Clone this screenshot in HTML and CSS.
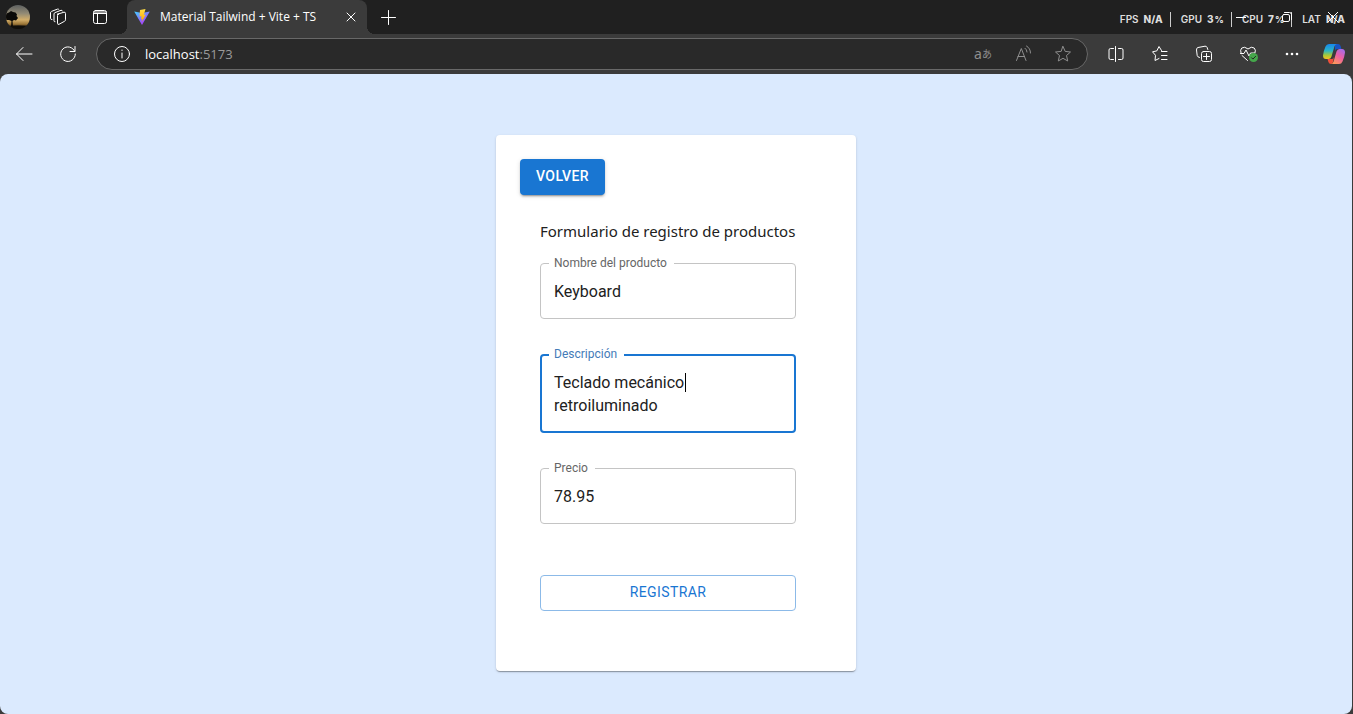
FILE: index.html
```html
<!DOCTYPE html>
<html lang="es">
<head>
<meta charset="utf-8">
<meta name="viewport" content="width=device-width, initial-scale=1">
<title>Material Tailwind + Vite + TS</title>
<link rel="stylesheet" href="styles.css">
</head>
<body>
<div class="browser">
  <header class="titlebar">
    <button class="profile" aria-label="Perfil">
      <svg width="24" height="24" viewBox="0 0 24 24">
        <defs>
          <linearGradient id="sky" x1="0" y1="0" x2="0" y2="1">
            <stop offset="0" stop-color="#5d6060"/><stop offset=".35" stop-color="#928a75"/>
            <stop offset=".62" stop-color="#d3ae69"/><stop offset=".8" stop-color="#9a7435"/>
            <stop offset=".9" stop-color="#2a2114"/><stop offset="1" stop-color="#15110c"/>
          </linearGradient>
          <clipPath id="disc"><circle cx="12" cy="12" r="12"/></clipPath>
        </defs>
        <g clip-path="url(#disc)">
          <rect width="24" height="24" fill="url(#sky)"/>
          <path d="M0 9 1.500 8 3 7.500 5 6 7 7 9.500 7.500 11 9.500 10.500 11 12 13 10 15.500 8 15 6.500 16 7 22H5L5.500 16 3 15 0 15Z" fill="#0b0a08"/>
          <path d="M0 21.500q8-1.500 24-.5v4H0Z" fill="#100e0a"/>
        </g>
      </svg>
    </button>
    <button class="bar-button" aria-label="Áreas de trabajo">
      <svg class="line" width="18" height="18" viewBox="0 0 18 18"><path d="M8.500 6.200 15 4.200q1.500-.2 1.500 1.200v6.400q0 1-1 1.500l-5.500 3q-1.500.5-1.500-1V7.500q0-.9 1-1.300ZM6 13.800q-1 .2-1-1V6q0-1 1-1.400l6-2.300q1.200-.3 1.500.7M3 11.500q-1.500.2-1.500-1V4.800q0-1 1-1.400l6-2.300q1-.3 1.500.5"/></svg>
    </button>
    <button class="bar-button" aria-label="Menú de pestañas">
      <svg class="line" width="16" height="16" viewBox="0 0 16 16"><rect x="1.500" y="1.500" width="13" height="13" rx="2"/><path d="M2 3h12M2 4.500h12M5.500 5v9"/></svg>
    </button>
    <div class="tab">
      <svg width="16" height="16" viewBox="0 0 16 16">
        <defs>
          <linearGradient id="vite" x1="0" y1="0" x2=".7" y2="1"><stop offset="0" stop-color="#41d1ff"/><stop offset="1" stop-color="#b52cfe"/></linearGradient>
          <linearGradient id="bolt" x1="0" y1="0" x2="0" y2="1"><stop offset="0" stop-color="#ffdf45"/><stop offset="1" stop-color="#ff9f00"/></linearGradient>
        </defs>
        <path d="M.2 2.600 8 16 15.800 2.600 8 4Z" fill="url(#vite)"/>
        <path d="M11.500 0 6 1.100 5.500 7.600 7.500 7.200 7 10.200 8.300 9.800 7.700 13 11.800 5.600 9.800 6Z" fill="url(#bolt)"/>
      </svg>
      <span class="tab-title">Material Tailwind + Vite + TS</span>
      <button class="tab-close" aria-label="Cerrar pestaña"><svg class="line" width="10" height="10" viewBox="0 0 10 10"><path d="M1 1l8 8M9 1 1 9"/></svg></button>
    </div>
    <button class="bar-button" aria-label="Nueva pestaña"><svg class="line" width="15" height="15" viewBox="0 0 15 15"><path d="M7.500 .5v14M.5 7.500h14"/></svg></button>
    <dl class="stats">
      <div class="stat"><dt>FPS</dt><dd>N/A</dd></div>
      <div class="stat"><dt>GPU</dt><dd>3<small>%</small></dd></div>
      <div class="stat"><dt>CPU</dt><dd>7<small>%</small></dd></div>
      <div class="stat"><dt>LAT</dt><dd>N/A</dd></div>
    </dl>
    <div class="window-controls">
      <button aria-label="Minimizar"><svg class="line" width="10" height="10" viewBox="0 0 10 10"><path d="M0 5.500h10"/></svg></button>
      <button aria-label="Restaurar"><svg class="line" width="10" height="10" viewBox="0 0 10 10"><rect x=".5" y="2.500" width="7" height="7" rx="1.500"/><path d="M2.500.5h5q2 0 2 2v5"/></svg></button>
      <button aria-label="Cerrar"><svg class="line" width="10" height="10" viewBox="0 0 10 10"><path d="M0 0l10 10M10 0 0 10"/></svg></button>
    </div>
  </header>

  <nav class="toolbar">
    <button class="tool" aria-label="Atrás"><svg class="line" width="18" height="16" viewBox="0 0 18 16"><path d="M1.500 8H17M8 1.500 1.500 8 8 14.500"/></svg></button>
    <button class="tool" aria-label="Actualizar"><svg class="line" width="18" height="18" viewBox="0 0 18 18"><path d="M15.800 6.500A7.300 7.300 0 1 0 16.300 9M16 1.500v5h-5"/></svg></button>
    <div class="address">
      <button class="info" aria-label="Información del sitio"><svg class="line" width="18" height="18" viewBox="0 0 18 18"><circle cx="9" cy="9" r="7.500"/><path d="M9 8v5M9 5v.5"/></svg></button>
      <div class="url" role="textbox" aria-label="Dirección" contenteditable="true" spellcheck="false"><span class="host">localhost</span>:5173</div>
      <button class="page-action translate" aria-label="Traducir">a<span class="kana">あ</span></button>
      <button class="page-action" aria-label="Leer en voz alta"><svg class="line" width="18" height="18" viewBox="0 0 18 18"><path d="M2.500 15.500 7.300 3.500 12 15.500M4 11.500h6.500M11 3.200q2 1.300 2 3.800M12.500 1q4 2.300 4 7"/></svg></button>
      <button class="page-action" aria-label="Agregar a favoritos"><svg class="line" width="18" height="18" viewBox="0 0 18 18"><path d="M9 1.500 11.200 6.400 16.500 7 12.500 10.500 13.700 16 9 13.300 4.300 16 5.500 10.500 1.500 7 6.800 6.400Z"/></svg></button>
    </div>
    <button class="tool" aria-label="Pantalla dividida"><svg class="line" width="18" height="18" viewBox="0 0 18 18"><path d="M6.500 3.500h-3q-1.500 0-1.500 1.500v8q0 1.500 1.500 1.500h3M11.500 3.500h3q1.500 0 1.500 1.500v8q0 1.500-1.500 1.500h-3M8.500 1.500v15"/></svg></button>
    <button class="tool" aria-label="Favoritos"><svg class="line" width="18" height="18" viewBox="0 0 18 18"><path d="M10.500 5.500 8 1.500 5.800 5.900 1.500 6.800 4.500 10.300 4 15.500 8 13.500M10.500 6.500H16M10.500 10.500H16M10.500 14.500H16"/></svg></button>
    <button class="tool" aria-label="Colecciones"><svg class="line" width="18" height="18" viewBox="0 0 18 18"><rect x="6.500" y="6.500" width="10" height="10" rx="2"/><path d="M11.500 8.500v6M8.500 11.500h6M4.500 12.500q-2-.3-2.300-2L1.500 5q-.2-2 1.500-2.500l7-1.300q1.500-.1 2 1l.8 2.300"/></svg></button>
    <button class="tool" aria-label="Estado del navegador"><svg width="20" height="18" viewBox="-1 0 20 18"><path class="stroke" d="M2 8Q.8 4.800 2.800 3 5.500 1 9 4q3.500-3 6.200-1Q17.200 4.800 16 8M3 10.500 8.500 15.500M1.500 8.500H5L7 5l3 6 1.500-3h4"/><circle cx="14.500" cy="12.500" r="4.500" fill="#45a74b"/><path d="M12.300 12.500l1.600 1.600 3-3" stroke="#222" fill="none"/></svg></button>
    <button class="tool" aria-label="Configuración y más"><svg width="14" height="4" viewBox="0 0 14 4" fill="#fff"><circle cx="2" cy="2" r="1.300"/><circle cx="7" cy="2" r="1.300"/><circle cx="12" cy="2" r="1.300"/></svg></button>
    <button class="tool copilot" aria-label="Copilot">
      <svg width="22" height="20" viewBox="0 0 22 20">
        <defs>
          <linearGradient id="cool" x1="0" y1="0" x2="0" y2="1"><stop offset="0" stop-color="#1687ee"/><stop offset=".45" stop-color="#2cb5c5"/><stop offset=".75" stop-color="#a8c936"/><stop offset="1" stop-color="#f6bf23"/></linearGradient>
          <linearGradient id="warm" x1=".8" y1="0" x2=".2" y2="1"><stop offset="0" stop-color="#a56be9"/><stop offset=".45" stop-color="#ed5fa5"/><stop offset="1" stop-color="#ff9b53"/></linearGradient>
        </defs>
        <path d="M12 0h3q2 0 2.600 2l.8 3H14q-1.500 0-2 2Z" fill="#1753c4"/>
        <path d="M4.500 15H9q1.500 0 2-2l-1 5q-.5 2-2 2 -2 0-2.600-2Z" fill="#f0503b"/>
        <path d="M6 0h8q-2 .2-2.600 2.500L8.500 12.500Q7.700 15 5.500 15H3q-3 0-3-3.500Q.5 7 2.500 2.500 3.500 0 6 0Z" fill="url(#cool)"/>
        <path d="M16 20H8q2-.2 2.600-2.500L13.500 7.500Q14.300 5 16.500 5H19q3 0 3 3.500Q21.500 13 19.500 17.500 18.500 20 16 20Z" fill="url(#warm)"/>
      </svg>
    </button>
  </nav>

  <main class="page">
    <section class="card">
      <button class="button contained">Volver</button>
      <form class="form">
        <h1 class="form-title">Formulario de registro de productos</h1>
        <div class="field">
          <input id="name" type="text" value="Keyboard">
          <label for="name">Nombre del producto</label>
        </div>
        <div class="field active">
          <textarea id="description" rows="2">Teclado mecánico retroiluminado</textarea>
          <label for="description">Descripción</label>
          <span class="caret"></span>
        </div>
        <div class="field">
          <input id="price" type="text" inputmode="decimal" value="78.95">
          <label for="price">Precio</label>
        </div>
        <button class="button outlined" type="button">Registrar</button>
      </form>
    </section>
  </main>
</div>
</body>
</html>
```
FILE: styles.css
```css
* {
  box-sizing: border-box;
}

body {
  margin: 0;
  background: #2b2b2b;
  font-family: Roboto, "Liberation Sans", sans-serif;
}

button {
  padding: 0;
  border: 0;
  background: none;
  font: inherit;
  color: inherit;
}

svg {
  display: block;
  flex: none;
}

.line,
.stroke {
  fill: none;
  stroke: currentColor;
  stroke-linecap: round;
  stroke-linejoin: round;
}

.browser {
  display: flex;
  flex-direction: column;
  min-height: 100vh;
  background: #3b3b3b;
  color: #fff;
}

/* Title bar */
.titlebar {
  position: relative;
  display: flex;
  align-items: center;
  height: 34px;
  background: #202020;
}

.profile {
  padding: 0 7px 0 6px;
}

.bar-button {
  display: grid;
  place-items: center;
  width: 42px;
  height: 34px;
}

.tab {
  position: relative;
  display: flex;
  align-items: center;
  gap: 10px;
  width: 240px;
  height: 34px;
  margin-left: 6px;
  padding: 0 10px 0 7px;
  border-radius: 8px 8px 0 0;
  background: #3b3b3b;
}

.tab::before,
.tab::after {
  content: "";
  position: absolute;
  bottom: 0;
  width: 8px;
  height: 8px;
}

.tab::before {
  right: 100%;
  background: radial-gradient(circle at 0 0, #202020 8px, #3b3b3b 8px);
}

.tab::after {
  left: 100%;
  background: radial-gradient(circle at 100% 0, #202020 8px, #3b3b3b 8px);
}

.tab-title {
  flex: 1;
  font: 12px/16px "Open Sans", "Noto Sans", sans-serif;
  white-space: nowrap;
}

.tab-close {
  display: grid;
  place-items: center;
  width: 12px;
  height: 16px;
}

.stats {
  display: flex;
  margin: 4px 8px 0 auto;
  font: 600 10px/14px Inter, sans-serif;
  color: #ddd;
}

.stat {
  display: flex;
  align-items: center;
  gap: 5px;
}

.stat + .stat {
  margin-left: 7px;
  padding-left: 10px;
  border-left: 1px solid #ccc;
}

.stat dd {
  margin: 0;
  font-weight: 800;
}

.stat small {
  padding-left: 1px;
  font-size: 9px;
}

.window-controls {
  position: absolute;
  top: 0;
  right: 0;
  display: flex;
}

.window-controls button {
  display: grid;
  place-items: center;
  width: 46px;
  height: 34px;
  padding-left: 6px;
}

/* Toolbar */
.toolbar {
  display: flex;
  align-items: center;
  height: 40px;
  padding-left: 2px;
}

.tool {
  display: grid;
  place-items: center;
  width: 44px;
  height: 32px;
}

.copilot {
  width: 39px;
}

.address {
  flex: 1;
  display: flex;
  align-items: center;
  height: 32px;
  margin: 0 6px;
  padding: 0 4px 0 16px;
  border: 1px solid #686868;
  border-radius: 16px;
  background: #292929;
}

.url {
  flex: 1;
  margin-left: 14px;
  font: 13px/20px "Open Sans", "Noto Sans", sans-serif;
  color: #9a9a9a;
  outline: 0;
}

.host {
  color: #fff;
}

.page-action {
  display: grid;
  place-items: center;
  width: 40px;
  height: 30px;
  color: #8e8e8e;
}

.translate {
  display: flex;
  align-items: center;
  justify-content: center;
  font: 14px/16px "Noto Sans", "Noto Sans CJK JP", sans-serif;
}

.kana {
  font-size: 10px;
}

/* Page */
.page {
  flex: 1;
  padding: 61px 0 43px;
  margin-right: 1px;
  border-radius: 8px;
  background: #dbeafe;
  color: #212121;
}

.card {
  width: 360px;
  margin: 0 auto;
  padding: 24px 24px 60px;
  border-radius: 4px;
  background: #fff;
  box-shadow: 0 2px 1px -1px rgba(0, 0, 0, .2), 0 1px 1px rgba(0, 0, 0, .14), 0 1px 3px rgba(0, 0, 0, .12);
}

.button {
  height: 36px;
  padding: 0 16px 2px;
  border-radius: 4px;
  font-size: 14px;
  font-weight: 500;
  line-height: 24px;
  letter-spacing: .02857em;
  text-transform: uppercase;
}

.contained {
  background: #1976d2;
  color: #fff;
  box-shadow: 0 3px 1px -2px rgba(0, 0, 0, .2), 0 2px 2px rgba(0, 0, 0, .14), 0 1px 5px rgba(0, 0, 0, .12);
}

.outlined {
  width: 100%;
  margin-top: 16px;
  border: 1px solid #8cbae8;
  color: #1976d2;
  font-weight: 400;
}

.form {
  display: flex;
  flex-direction: column;
  gap: 35px;
  margin: 24px 36px 0 20px;
}

.form-title {
  margin: 0 0 -15px;
  font: 400 15px/24px "Noto Sans", "Open Sans", sans-serif;
  white-space: nowrap;
}

.field {
  position: relative;
}

.field input,
.field textarea {
  display: block;
  width: 100%;
  border: 1px solid #c4c4c4;
  border-radius: 4px;
  background: #fff;
  font: 16px/23px Roboto, sans-serif;
  color: #212121;
  outline: 0;
}

.field input {
  height: 56px;
  padding: 0 13px;
}

.field textarea {
  height: 79px;
  padding: 15px 12px 14px;
  border: 2px solid #1976d2;
  overflow: hidden;
  resize: none;
}

.field label {
  position: absolute;
  top: -8px;
  left: 9px;
  padding: 0 7px 0 5px;
  background: #fff;
  font-size: 12px;
  line-height: 16px;
  color: #666;
}

.active label {
  color: #447bb8;
}

.caret {
  position: absolute;
  top: 19px;
  left: 145px;
  width: 1px;
  height: 19px;
  background: #000;
}
```
